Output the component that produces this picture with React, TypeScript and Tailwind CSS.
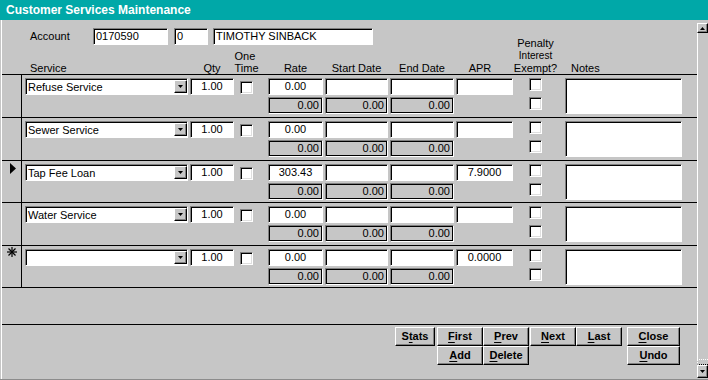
import React from 'react';

type Rec = {
  service: string;
  rate: string;
  apr: string;
  marker?: 'current' | 'new';
  h: string;
};

const RECORDS: Rec[] = [
  { service: 'Refuse Service', rate: '0.00', apr: '', h: 'h-[43px]' },
  { service: 'Sewer Service', rate: '0.00', apr: '', h: 'h-[43px]' },
  { service: 'Tap Fee Loan', rate: '303.43', apr: '7.9000', marker: 'current', h: 'h-[42px]' },
  { service: 'Water Service', rate: '0.00', apr: '', h: 'h-[43px]' },
  { service: '', rate: '0.00', apr: '0.0000', marker: 'new', h: 'h-[42px]' },
];

// classic 3d borders
const sunkenEdge = 'border border-t-[#808080] border-l-[#808080] border-r-white border-b-white';
const raised =
  'border border-t-white border-l-white border-r-black border-b-black shadow-[inset_-1px_-1px_0_#808080] bg-[#c6c6c6]';

const Field = ({
  value = '',
  gray = false,
  left = false,
  className = '',
}: {
  value?: string;
  gray?: boolean;
  left?: boolean;
  className?: string;
}) => (
  <div
    className={`h-[17px] ${sunkenEdge} ${
      gray
        ? 'bg-[#c6c6c6] shadow-[inset_0_0_0_1px_#000] text-right pr-[3px]'
        : `bg-white shadow-[inset_1px_1px_0_#000] ${left ? 'text-left pl-[2px]' : 'text-center'}`
    } text-[11px] leading-[15px] whitespace-nowrap overflow-hidden ${className}`}
  >
    {value}
  </div>
);

const Check = () => (
  <div
    className={`w-[13px] h-[13px] bg-white ${sunkenEdge} shadow-[inset_1px_1px_0_#000,inset_-1px_-1px_0_#dfdfdf]`}
  />
);

const Combo = ({ value }: { value: string }) => (
  <div className={`h-[17px] flex bg-white ${sunkenEdge} shadow-[inset_1px_1px_0_#000] pt-px pl-px`}>
    <div className="flex-1 text-[11px] leading-[14px] pl-px whitespace-nowrap overflow-hidden">{value}</div>
    <div className={`w-[13px] h-[13px] ${raised} flex items-center justify-center`}>
      <svg width="5" height="3" viewBox="0 0 5 3">
        <polygon points="0,0 5,0 2.5,3" fill="#000" />
      </svg>
    </div>
  </div>
);

const Btn = ({ label, u, className = '' }: { label: string; u: number; className?: string }) => (
  <div
    className={`h-[19px] ${raised} flex items-center justify-center text-[11px] font-bold leading-none ${className}`}
  >
    {label.slice(0, u)}
    <span className="underline underline-offset-[2px]">{label[u]}</span>
    {label.slice(u + 1)}
  </div>
);

const Marker = ({ kind }: { kind?: 'current' | 'new' }) => {
  if (kind === 'current') {
    return (
      <svg width="6" height="11" viewBox="0 0 6 11" className="ml-[8px] mt-[2px]">
        <polygon points="0,0 6,5.5 0,11" fill="#000" />
      </svg>
    );
  }
  if (kind === 'new') {
    return (
      <svg width="10" height="10" viewBox="0 0 10 10" className="ml-[5px] mt-[1px]">
        <g stroke="#000" strokeWidth="1.2">
          <line x1="5" y1="0" x2="5" y2="10" />
          <line x1="0" y1="5" x2="10" y2="5" />
          <line x1="1.5" y1="1.5" x2="8.5" y2="8.5" />
          <line x1="8.5" y1="1.5" x2="1.5" y2="8.5" />
        </g>
      </svg>
    );
  }
  return null;
};

const RecordRow = ({ rec }: { rec: Rec }) => (
  <div className={`flex ${rec.h} border-b border-black`}>
    <div className="w-[20px] border-r border-black flex items-start">
      <Marker kind={rec.marker} />
    </div>
    <div className="ml-[3px] w-[163px] pt-[3px]">
      <Combo value={rec.service} />
    </div>
    <div className="ml-[2px] w-[44px] pt-[3px]">
      <Field value="1.00" />
    </div>
    <div className="ml-[6px] w-[13px] pt-[6px]">
      <Check />
    </div>
    <div className="ml-[15px] w-[55px] pt-[3px] flex flex-col gap-[2px]">
      <Field value={rec.rate} />
      <Field value="0.00" gray />
    </div>
    <div className="ml-[2px] w-[63px] pt-[3px] flex flex-col gap-[2px]">
      <Field />
      <Field value="0.00" gray />
    </div>
    <div className="ml-[2px] w-[64px] pt-[3px] flex flex-col gap-[2px]">
      <Field />
      <Field value="0.00" gray />
    </div>
    <div className="ml-[2px] w-[57px] pt-[3px]">
      <Field value={rec.apr} />
    </div>
    <div className="ml-[16px] w-[13px] pt-[3px] flex flex-col gap-[6px]">
      <Check />
      <Check />
    </div>
    <div className="ml-[23px] w-[117px] pt-[3px]">
      <div className={`h-[36px] bg-white ${sunkenEdge} shadow-[inset_1px_1px_0_#000]`} />
    </div>
  </div>
);

export default function App() {
  return (
    <div className="w-[708px] h-[380px] bg-[#c6c6c6] flex flex-col border-b border-[#8c8c8c] overflow-hidden font-['Liberation_Sans',Arial,sans-serif] text-black text-[11px]">
      {/* Title bar */}
      <div className="h-[20px] shrink-0 bg-[#00a8a8] text-white font-bold text-[12px] leading-[20px] pl-[6px]">
        Customer Services Maintenance
      </div>

      <div className="flex-1 flex min-h-0">
        {/* Form body */}
        <div className="flex-1 pl-px flex">
          <div className="flex-1 border-l border-white flex flex-col">
            {/* Header */}
            <div className="h-[55px] shrink-0 border-b border-black flex">
              <div className="w-[511px] flex flex-col justify-between">
                <div className="flex items-center mt-[8px] h-[17px]">
                  <span className="ml-[28px] w-[63px]">Account</span>
                  <Field value="0170590" left className="w-[75px]" />
                  <Field value="0" left className="ml-[6px] w-[34px]" />
                  <Field value="TIMOTHY SINBACK" left className="ml-[5px] w-[160px]" />
                </div>
                <div className="flex items-end leading-[12px]">
                  <div className="w-[20px]" />
                  <div className="ml-[3px] w-[163px] pl-[5px]">Service</div>
                  <div className="ml-[2px] w-[44px] text-center">Qty</div>
                  <div className="ml-[6px] w-[13px] flex justify-center">
                    <div className="whitespace-nowrap text-left">
                      One
                      <br />
                      Time
                    </div>
                  </div>
                  <div className="ml-[15px] w-[55px] text-center">Rate</div>
                  <div className="ml-[2px] w-[63px] text-center whitespace-nowrap">Start Date</div>
                  <div className="ml-[2px] w-[64px] text-center whitespace-nowrap">End Date</div>
                  <div className="ml-[2px] w-[57px] text-center pr-[9px]">APR</div>
                </div>
              </div>
              <div className="flex items-end leading-[12px]">
                <div className="ml-[16px] w-[13px] flex justify-center">
                  <div className="whitespace-nowrap text-center">
                    Penalty
                    <br />
                    <span className="text-[10px]">Interest</span>
                    <br />
                    Exempt?
                  </div>
                </div>
                <div className="ml-[23px] w-[117px] pl-[6px]">Notes</div>
              </div>
            </div>

            {/* Records */}
            {RECORDS.map((rec, i) => (
              <RecordRow key={i} rec={rec} />
            ))}

            <div className="h-[37px] shrink-0 border-b border-black" />

            {/* Navigation buttons */}
            <div className="flex-1 pt-[2px] pl-[393px] flex flex-col">
              <div className="flex">
                <Btn label="Stats" u={1} className="w-[40px]" />
                <Btn label="First" u={0} className="ml-[2px] w-[46px]" />
                <Btn label="Prev" u={0} className="w-[46px]" />
                <Btn label="Next" u={0} className="ml-px w-[46px]" />
                <Btn label="Last" u={0} className="w-[46px]" />
                <Btn label="Close" u={0} className="ml-[5px] w-[53px]" />
              </div>
              <div className="flex">
                <Btn label="Add" u={0} className="ml-[42px] w-[46px]" />
                <Btn label="Delete" u={0} className="w-[46px]" />
                <Btn label="Undo" u={0} className="ml-[98px] w-[53px]" />
              </div>
            </div>
          </div>
        </div>

        {/* Vertical scrollbar */}
        <div className="w-[11px] flex flex-col pt-[3px] pb-[1px]">
          <div className={`h-[10px] ${raised} flex items-center justify-center`}>
            <svg width="5" height="3" viewBox="0 0 5 3">
              <polygon points="2.5,0 5,3 0,3" fill="#000" />
            </svg>
          </div>
          <div className="flex-1 border-l border-white" />
          <div className="h-[6px] border-l border-white border-b border-b-black border-t border-dotted border-t-white" />
          <div className={`h-[13px] ${raised} flex items-center justify-center`}>
            <svg width="5" height="3" viewBox="0 0 5 3">
              <polygon points="0,0 5,0 2.5,3" fill="#000" />
            </svg>
          </div>
        </div>
      </div>
    </div>
  );
}
